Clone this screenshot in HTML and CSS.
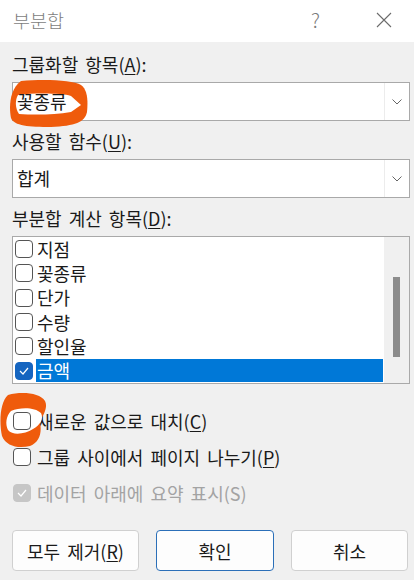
FILE: index.html
```html
<!DOCTYPE html>
<html>
	<head>
		<meta charset="utf-8" />
		<title>부분합</title>
		<link rel="stylesheet" href="styles.css">
	</head>
	<body>
	<div class="dialog">
		<header class="titlebar">
			<span class="title">부분합</span>
			<span class="help">?</span>
			<span class="close">
				<svg width="16" height="16" viewBox="0 0 16 16"><path d="M1 1 L15 15 M15 1 L1 15" stroke="#6b6b6b" stroke-width="1.1" fill="none"/></svg>
			</span>
		</header>

		<main class="content">
			<p class="field-label">그룹화할 항목(<u>A</u>):</p>
			<div class="combo">
				<svg class="scribble scribble-combo" width="80" height="48" viewBox="0 0 80 48">
					<path d="M12 1 C35 -1 64 0 72 5 C79 10 79 22 78 32 C76 42 66 46 42 47 C20 47 5 46 2 38 C0 28 0 10 12 1 Z" fill="#ef5b0c"/>
					<path d="M9 15 C25 13 52 13 62 16 L72 25 L62 32 C45 35 25 35 10 34 C6 28 6 20 9 15 Z" fill="#ffffff"/>
				</svg>
				<span class="combo-value">꽃종류</span>
				<span class="combo-arrow">
					<svg width="10" height="6" viewBox="0 0 10 6"><polyline points="0.5,0.5 5,5 9.5,0.5" stroke="#666" stroke-width="1" fill="none"/></svg>
				</span>
			</div>

			<p class="field-label">사용할 함수(<u>U</u>):</p>
			<div class="combo">
				<span class="combo-value">합계</span>
				<span class="combo-arrow">
					<svg width="10" height="6" viewBox="0 0 10 6"><polyline points="0.5,0.5 5,5 9.5,0.5" stroke="#666" stroke-width="1" fill="none"/></svg>
				</span>
			</div>

			<p class="field-label">부분합 계산 항목(<u>D</u>):</p>
			<div class="listbox">
				<ul class="list-items">
					<li class="item"><span class="check"></span><span class="item-text">지점</span></li>
					<li class="item"><span class="check"></span><span class="item-text">꽃종류</span></li>
					<li class="item"><span class="check"></span><span class="item-text">단가</span></li>
					<li class="item"><span class="check"></span><span class="item-text">수량</span></li>
					<li class="item"><span class="check"></span><span class="item-text">할인율</span></li>
					<li class="item selected">
						<span class="check checked">
							<svg width="10" height="8" viewBox="0 0 10 8"><polyline points="1,4 4,7 9,1" stroke="#fff" stroke-width="1.2" fill="none"/></svg>
						</span>
						<span class="item-text">금액</span>
					</li>
				</ul>
				<div class="scrollbar"><div class="thumb"></div></div>
			</div>

			<div class="options">
				<div class="option">
					<svg class="scribble scribble-check" width="50" height="56" viewBox="0 0 50 56">
						<path d="M8 3 C22 -1 40 1 45 9 C48 15 44 22 40 30 C42 40 40 50 30 54 C18 57 6 54 2 44 C-1 30 0 10 8 3 Z" fill="#ef5b0c"/>
						<path d="M11 19 C20 15 35 15 41 21 C44 27 40 33 33 37 C25 42 13 44 8 38 C5 32 6 24 11 19 Z" fill="#ffffff"/>
					</svg>
					<span class="check"></span>
					<span class="option-text">새로운 값으로 대치(<u>C</u>)</span>
				</div>
				<div class="option">
					<span class="check"></span>
					<span class="option-text">그룹 사이에서 페이지 나누기(<u>P</u>)</span>
				</div>
				<div class="option disabled">
					<span class="check checked">
						<svg width="10" height="8" viewBox="0 0 10 8"><polyline points="1,4 4,7 9,1" stroke="#fff" stroke-width="1.2" fill="none"/></svg>
					</span>
					<span class="option-text">데이터 아래에 요약 표시(S)</span>
				</div>
			</div>

			<div class="buttons">
				<button type="button" class="btn btn-remove">모두 제거(<u>R</u>)</button>
				<button type="button" class="btn btn-ok">확인</button>
				<button type="button" class="btn btn-cancel">취소</button>
			</div>
		</main>
	</div>
	</body>
</html>
```

FILE: styles.css
```css
html,body{
	margin: 0;
	padding: 0;
}
body{
	width: 414px;
	height: 580px;
	overflow: hidden;
	background-color: #f0f0f0;
	font-family: "Noto Sans CJK KR", "Noto Sans", sans-serif;
	color: #1a1a1a;
	word-spacing: 3px;
}
p,ul{
	margin: 0;
	padding: 0;
}
u{
	text-underline-offset: 2px;
}

.titlebar{
	height: 42px;
	background-color: #ffffff;
	display: flex;
	align-items: center;
	padding-left: 13px;
}
.title{
	font-size: 18.5px;
	font-weight: 300;
	line-height: 24px;
	color: #7d7d7d;
	flex: 1;
	margin-top: -2px;
}
.help{
	font-size: 20px;
	font-weight: 300;
	line-height: 24px;
	color: #7a7a7a;
	margin-right: 56px;
	margin-top: -3px;
}
.close{
	display: flex;
	margin-right: 22px;
	margin-top: -2px;
}

.content{
	padding: 10px 4px 0 12px;
	border-left: 3px solid #ffffff;
	margin-left: -3px;
}
.field-label{
	font-size: 18px;
	line-height: 24px;
	margin-top: 8px;
}
.field-label:first-child{
	margin-top: 0;
}

.combo{
	position: relative;
	height: 39px;
	box-sizing: border-box;
	margin-top: 6px;
	border: 1px solid #a9a9a9;
	background-color: #ffffff;
	display: flex;
	align-items: center;
}
.combo-value{
	position: relative;
	flex: 1;
	padding-left: 4px;
	font-size: 18px;
	line-height: 24px;
	margin-top: -1px;
}
.combo-arrow{
	width: 24px;
	height: 100%;
	border-left: 1px solid #ececec;
	display: flex;
	align-items: center;
	justify-content: center;
}

.scribble{
	position: absolute;
}
.scribble-combo{
	left: -4px;
	top: -3px;
}
.scribble-check{
	left: -12px;
	top: -11px;
}

.listbox{
	margin-top: 6px;
	height: 148px;
	box-sizing: border-box;
	border: 1px solid #a9a9a9;
	background-color: #ffffff;
	display: flex;
}
.list-items{
	list-style: none;
	flex: 1;
	padding-left: 2px;
	padding-right: 1px;
}
.item{
	height: 24.33px;
	display: flex;
	align-items: center;
	gap: 3px;
	font-size: 18px;
}
.item-text{
	flex: 1;
	line-height: 23px;
	padding-left: 1px;
}
.item.selected .item-text{
	background-color: #0078d7;
	color: #ffffff;
}
.scrollbar{
	width: 25px;
	background-color: #f0f0f0;
	display: flex;
	justify-content: center;
	padding-top: 40px;
	box-sizing: border-box;
}
.thumb{
	width: 7px;
	height: 80px;
	background-color: #8c8c8c;
}

.check{
	width: 18px;
	height: 18px;
	box-sizing: border-box;
	border: 1px solid #555555;
	border-radius: 4px;
	background-color: #ffffff;
	display: flex;
	align-items: center;
	justify-content: center;
	flex-shrink: 0;
}
.item .check.checked{
	background-color: #1565c0;
	border-color: #1565c0;
}

.options{
	margin-top: 19px;
}
.option{
	position: relative;
	height: 36px;
	display: flex;
	align-items: center;
	gap: 6px;
	padding-left: 1px;
	font-size: 18px;
}
.option .check{
	position: relative;
	z-index: 2;
}
.option.disabled{
	color: #a3a3a3;
}
.option.disabled .check{
	background-color: #c6c6c6;
	border-color: #c6c6c6;
}

.buttons{
	margin-top: 19px;
	display: flex;
	gap: 17px;
}
.btn{
	height: 41px;
	box-sizing: border-box;
	border: 1px solid #d0d0d0;
	border-radius: 4px;
	background-color: #fdfdfd;
	font-family: "Noto Sans CJK KR", "Noto Sans", sans-serif;
	font-size: 18px;
	word-spacing: 3px;
	color: #1a1a1a;
	padding: 0;
}
.btn-remove{
	width: 127px;
}
.btn-ok{
	width: 118px;
	border: 1.5px solid #2b6fb8;
}
.btn-cancel{
	width: 117px;
}
```
